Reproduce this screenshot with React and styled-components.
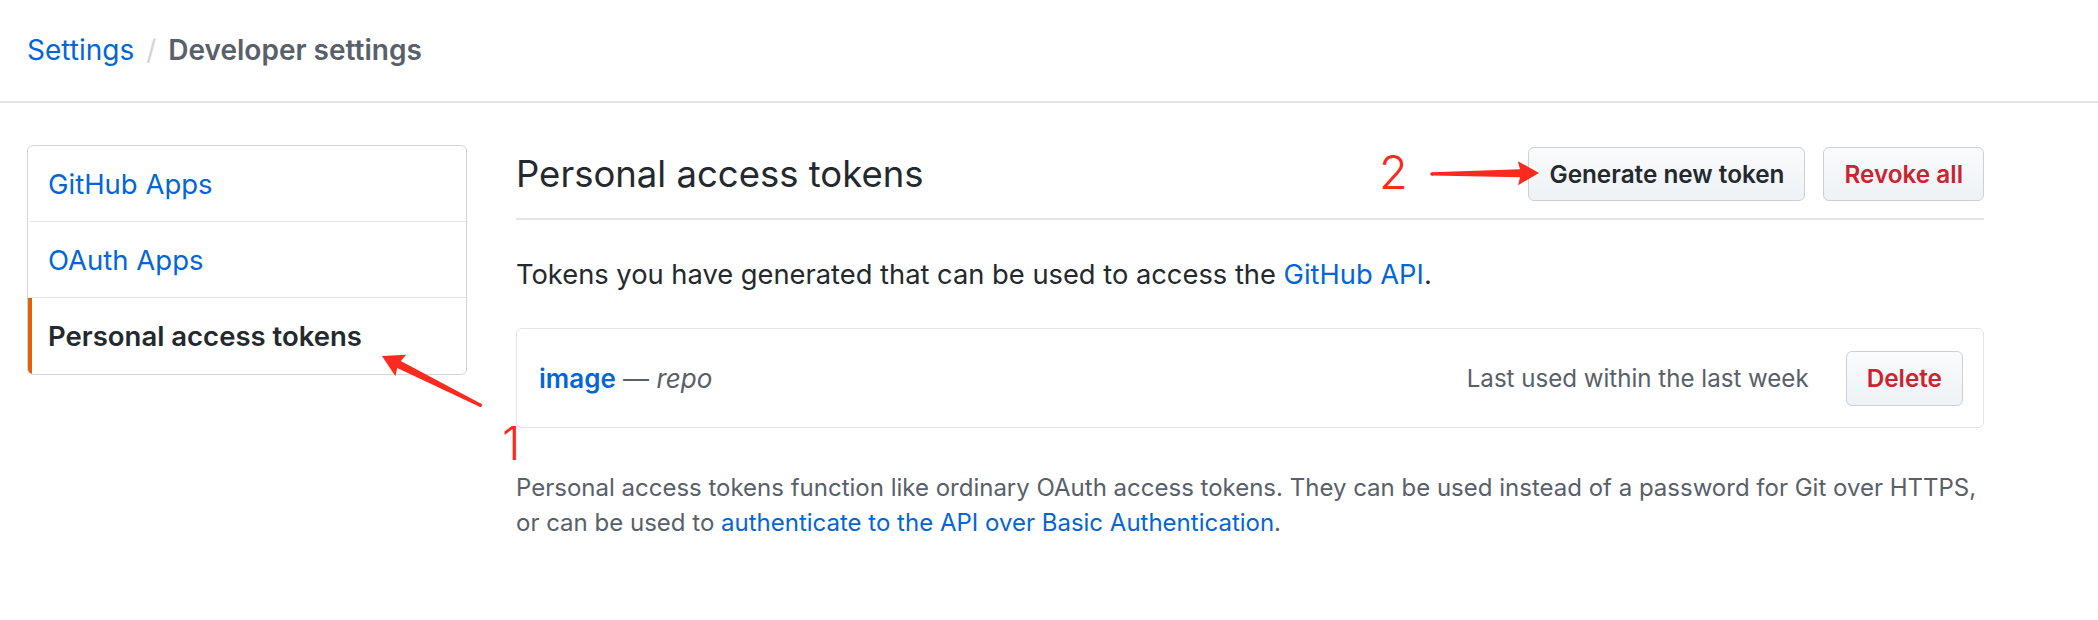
import styled, { createGlobalStyle } from 'styled-components'

const GlobalStyle = createGlobalStyle`
  html, body {
    margin: 0;
    padding: 0;
    background: #fff;
  }
  * {
    box-sizing: border-box;
  }
`

const menu = [
  { label: 'GitHub Apps' },
  { label: 'OAuth Apps' },
  { label: 'Personal access tokens', active: true }
]

// arrow drawn pointing to +x, tip at 0,0
const Arrow = ({ x, y, length, angle }) => (
  <g transform={`translate(${x} ${y}) rotate(${angle})`}>
    <polygon
      points={`${-length},-1.6 -19,-4 -21,-12 0,0 -21,12 -19,4 ${-length},1.6`}
      fill='#fa2a1f'
    />
    <circle cx={-length} cy='0' r='1.8' fill='#fa2a1f' />
  </g>
)

const App = () => {
  return (
    <Page>
      <GlobalStyle />
      <Header>
        <Crumb href='#'>Settings</Crumb>
        <Slash>/</Slash>
        <Current>Developer settings</Current>
      </Header>

      <Layout>
        <SideMenu>
          {menu.map(item => (
            <MenuItem key={item.label} active={item.active}>{item.label}</MenuItem>
          ))}
        </SideMenu>

        <Main>
          <Subhead>
            <Heading>Personal access tokens</Heading>
            <Actions>
              <Button>Generate new token</Button>
              <Button danger>Revoke all</Button>
            </Actions>
          </Subhead>

          <Intro>
            Tokens you have generated that can be used to access the <Link href='#'>GitHub API</Link>.
          </Intro>

          <TokenBox>
            <TokenName>
              <strong>image</strong> — <em>repo</em>
            </TokenName>
            <LastUsed>Last used within the last week</LastUsed>
            <Button danger small>Delete</Button>
          </TokenBox>

          <Note>
            Personal access tokens function like ordinary OAuth access tokens. They can be used instead of a password for Git over HTTPS,
            <br />
            or can be used to <Link href='#'>authenticate to the API over Basic Authentication</Link>.
          </Note>
        </Main>
      </Layout>

      <Annotations width='2098' height='620' viewBox='0 0 2098 620'>
        <Arrow x={1539} y={173} length={107} angle={-0.5} />
        <Arrow x={382} y={356} length={110} angle={206.6} />
        <AnnotationText x='1379' y='189'>2</AnnotationText>
        <AnnotationText x='502' y='460'>1</AnnotationText>
      </Annotations>
    </Page>
  )
}

export default App

const Page = styled.div`
  position: relative;
  width: 2098px;
  min-height: 620px;
  background: #fff;
  color: #24292e;
  font-family: Inter, 'Liberation Sans', sans-serif;
`

const Header = styled.header`
  display: flex;
  align-items: center;
  height: 103px;
  padding: 0 27px 2px;
  border-bottom: 2px solid #e1e4e8;
  font-size: 28px;
`

const Crumb = styled.a`
  color: #0366d6;
  text-decoration: none;
`

const Slash = styled.span`
  margin: 0 12px;
  color: #d1d5da;
`

const Current = styled.span`
  color: #586069;
  font-weight: 600;
`

const Layout = styled.div`
  display: flex;
  align-items: flex-start;
  gap: 49px;
  padding: 42px 114px 0 27px;
`

const SideMenu = styled.nav`
  display: flex;
  flex-direction: column;
  width: 440px;
  flex-shrink: 0;
  border: 1px solid #d1d5da;
  border-radius: 6px;
  overflow: hidden;
`

const MenuItem = styled.a`
  display: flex;
  align-items: center;
  height: 76px;
  padding-left: 16px;
  font-size: 27.5px;
  font-weight: ${props => props.active ? 600 : 400};
  color: ${props => props.active ? '#24292e' : '#0366d6'};
  border-bottom: 1px solid #e1e4e8;
  border-left: 4px solid ${props => props.active ? '#e36209' : 'transparent'};
  &:last-child {
    border-bottom: none;
  }
`

const Main = styled.main`
  flex: 1;
  min-width: 0;
  padding-top: 2px;
`

const Subhead = styled.div`
  display: flex;
  align-items: center;
  padding-bottom: 17px;
  border-bottom: 2px solid #e1e4e8;
`

const Heading = styled.h2`
  margin: 0;
  font-size: 36.5px;
  font-weight: 400;
  color: #24292e;
`

const Actions = styled.div`
  display: flex;
  gap: 18px;
  margin-left: auto;
`

const Button = styled.button`
  height: ${props => props.small ? '55px' : '54px'};
  padding: 0 20px;
  font-family: inherit;
  font-size: 24.3px;
  font-weight: 600;
  color: ${props => props.danger ? '#cb2431' : '#24292e'};
  background-color: #eff3f6;
  background-image: linear-gradient(-180deg, #fafbfc 0%, #eff3f6 90%);
  border: 1.5px solid #cdd1d6;
  border-radius: 6px;
  cursor: pointer;
`

const Intro = styled.p`
  margin: 35px 0 0;
  font-size: 27.3px;
  line-height: 40px;
`

const Link = styled.a`
  color: #0366d6;
  text-decoration: none;
`

const TokenBox = styled.div`
  display: flex;
  align-items: center;
  height: 100px;
  margin-top: 33px;
  padding: 0 20px 0 22px;
  border: 1.5px solid #e1e4e8;
  border-radius: 6px;
`

const TokenName = styled.div`
  flex: 1;
  font-size: 26px;
  color: #586069;
  strong {
    color: #0366d6;
    font-weight: 600;
  }
`

const LastUsed = styled.span`
  margin-right: 37px;
  font-size: 24.1px;
  color: #586069;
`

const Note = styled.p`
  margin: 42px 0 0;
  font-size: 24px;
  line-height: 35px;
  color: #586069;
  white-space: nowrap;
`

const Annotations = styled.svg`
  position: absolute;
  top: 0;
  left: 0;
  pointer-events: none;
`

const AnnotationText = styled.text`
  font-family: Inter, 'Liberation Sans', sans-serif;
  font-size: 47px;
  font-weight: 300;
  fill: #fa2a1f;
`
